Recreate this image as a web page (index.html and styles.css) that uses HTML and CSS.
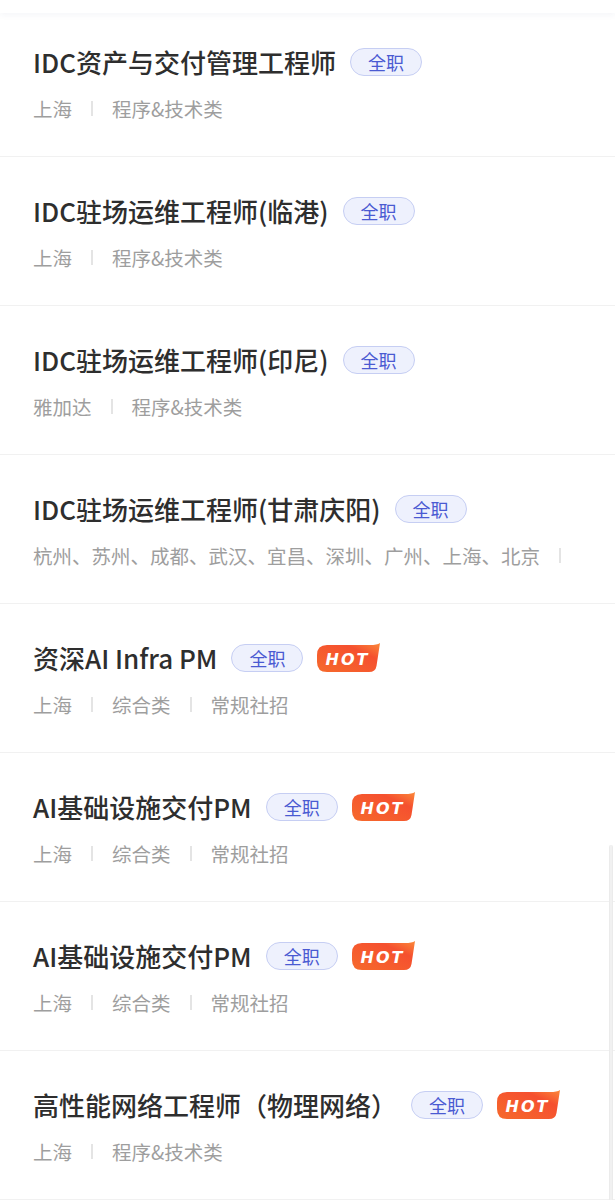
FILE: index.html
```html
<!DOCTYPE html>
<html lang="zh-CN">
<head>
<meta charset="utf-8">
<title>职位列表</title>
<link rel="stylesheet" href="styles.css">
</head>
<body>
<div class="page">
  <div class="topbar"></div>
  <ul class="jobs">
    <li class="job">
      <div class="title-row"><span class="title">IDC资产与交付管理工程师</span><span class="tag">全职</span></div>
      <div class="meta"><span>上海</span><i class="sep"></i><span>程序&amp;技术类</span></div>
    </li>
    <li class="job">
      <div class="title-row"><span class="title">IDC驻场运维工程师(临港)</span><span class="tag">全职</span></div>
      <div class="meta"><span>上海</span><i class="sep"></i><span>程序&amp;技术类</span></div>
    </li>
    <li class="job">
      <div class="title-row"><span class="title">IDC驻场运维工程师(印尼)</span><span class="tag">全职</span></div>
      <div class="meta"><span>雅加达</span><i class="sep"></i><span>程序&amp;技术类</span></div>
    </li>
    <li class="job">
      <div class="title-row"><span class="title">IDC驻场运维工程师(甘肃庆阳)</span><span class="tag">全职</span></div>
      <div class="meta meta-long"><span>杭州、苏州、成都、武汉、宜昌、深圳、广州、上海、北京</span><i class="sep"></i><span>程序&amp;技术类</span></div>
    </li>
    <li class="job">
      <div class="title-row"><span class="title">资深AI Infra PM</span><span class="tag">全职</span><span class="hot"><svg viewBox="0 0 63 29" width="63" height="29"><defs><linearGradient id="g1" x1="0" y1="1" x2="1" y2="0"><stop offset="0" stop-color="#f66a2c"/><stop offset="0.7" stop-color="#f5502f"/><stop offset="1" stop-color="#fb8a3a"/></linearGradient></defs><path d="M10 2 L53 2 Q60 2 63 0 L59.5 23 Q58.5 29 52 29 L10 29 Q0 29 0 19 L0 12 Q0 2 10 2 Z" fill="url(#g1)"/><text x="30.5" y="21.5" text-anchor="middle" class="hot-text">HOT</text></svg></span></div>
      <div class="meta"><span>上海</span><i class="sep"></i><span>综合类</span><i class="sep"></i><span>常规社招</span></div>
    </li>
    <li class="job">
      <div class="title-row"><span class="title">AI基础设施交付PM</span><span class="tag">全职</span><span class="hot"><svg viewBox="0 0 63 29" width="63" height="29"><defs><linearGradient id="g2" x1="0" y1="1" x2="1" y2="0"><stop offset="0" stop-color="#f66a2c"/><stop offset="0.7" stop-color="#f5502f"/><stop offset="1" stop-color="#fb8a3a"/></linearGradient></defs><path d="M10 2 L53 2 Q60 2 63 0 L59.5 23 Q58.5 29 52 29 L10 29 Q0 29 0 19 L0 12 Q0 2 10 2 Z" fill="url(#g2)"/><text x="30.5" y="21.5" text-anchor="middle" class="hot-text">HOT</text></svg></span></div>
      <div class="meta"><span>上海</span><i class="sep"></i><span>综合类</span><i class="sep"></i><span>常规社招</span></div>
    </li>
    <li class="job">
      <div class="title-row"><span class="title">AI基础设施交付PM</span><span class="tag">全职</span><span class="hot"><svg viewBox="0 0 63 29" width="63" height="29"><defs><linearGradient id="g3" x1="0" y1="1" x2="1" y2="0"><stop offset="0" stop-color="#f66a2c"/><stop offset="0.7" stop-color="#f5502f"/><stop offset="1" stop-color="#fb8a3a"/></linearGradient></defs><path d="M10 2 L53 2 Q60 2 63 0 L59.5 23 Q58.5 29 52 29 L10 29 Q0 29 0 19 L0 12 Q0 2 10 2 Z" fill="url(#g3)"/><text x="30.5" y="21.5" text-anchor="middle" class="hot-text">HOT</text></svg></span></div>
      <div class="meta"><span>上海</span><i class="sep"></i><span>综合类</span><i class="sep"></i><span>常规社招</span></div>
    </li>
    <li class="job">
      <div class="title-row"><span class="title">高性能网络工程师（物理网络）</span><span class="tag">全职</span><span class="hot"><svg viewBox="0 0 63 29" width="63" height="29"><defs><linearGradient id="g4" x1="0" y1="1" x2="1" y2="0"><stop offset="0" stop-color="#f66a2c"/><stop offset="0.7" stop-color="#f5502f"/><stop offset="1" stop-color="#fb8a3a"/></linearGradient></defs><path d="M10 2 L53 2 Q60 2 63 0 L59.5 23 Q58.5 29 52 29 L10 29 Q0 29 0 19 L0 12 Q0 2 10 2 Z" fill="url(#g4)"/><text x="30.5" y="21.5" text-anchor="middle" class="hot-text">HOT</text></svg></span></div>
      <div class="meta"><span>上海</span><i class="sep"></i><span>程序&amp;技术类</span></div>
    </li>
  </ul>
  <div class="scrollbar"></div>
</div>
</body>
</html>
```

FILE: styles.css
```css
* { box-sizing: border-box; }
html, body {
  margin: 0;
  padding: 0;
  background: #fff;
}
body {
  font-family: "Noto Sans CJK SC", "Noto Sans", sans-serif;
  color: #333;
}
.page {
  position: relative;
  width: 615px;
  height: 1200px;
  overflow: hidden;
  padding-top: 8px;
}
.topbar {
  position: absolute;
  left: 0;
  top: 0;
  width: 100%;
  height: 13px;
  background: #fff;
  box-shadow: 0 2px 6px rgba(30, 50, 120, 0.05);
  z-index: 2;
}
.jobs {
  list-style: none;
  margin: 0;
  padding: 0;
}
.job {
  height: 149px;
  padding: 36px 33px 0 33px;
  border-bottom: 1px solid #f1f1f1;
}
.title-row {
  display: flex;
  align-items: center;
  gap: 14px;
  height: 36px;
}
.title {
  font-size: 26px;
  font-weight: 500;
  color: #2e2e2e;
  line-height: 36px;
  white-space: nowrap;
}
.tag {
  display: inline-flex;
  align-items: center;
  justify-content: center;
  height: 28px;
  padding: 0 17px;
  border: 1px solid #c6cef3;
  background: #eef1fd;
  border-radius: 14px;
  color: #4a5ad2;
  font-size: 18px;
  line-height: 1;
}
.hot {
  display: inline-flex;
  width: 63px;
  height: 29px;
  margin-top: -2px;
}
.hot svg { display: block; }
.hot-text {
  fill: #fff;
  font-family: "DejaVu Sans", "Liberation Sans", sans-serif;
  font-size: 16px;
  font-weight: 700;
  font-style: italic;
  letter-spacing: 2px;
}
.meta {
  margin-top: 11px;
  white-space: nowrap;
  font-size: 19.5px;
  line-height: 30px;
  color: #9e9e9e;
}
.meta-long {
  width: 540px;
  overflow: hidden;
}
.meta span { vertical-align: middle; }
.sep {
  display: inline-block;
  width: 2px;
  height: 15px;
  margin: 0 19px;
  background: #e4e4e4;
  vertical-align: middle;
}
.scrollbar {
  position: absolute;
  right: 2px;
  top: 845px;
  width: 4px;
  height: 360px;
  background: #f1f1f1;
  border-left: 1px solid #ebebeb;
  border-right: 1px solid #ebebeb;
  border-radius: 2px;
}
```
